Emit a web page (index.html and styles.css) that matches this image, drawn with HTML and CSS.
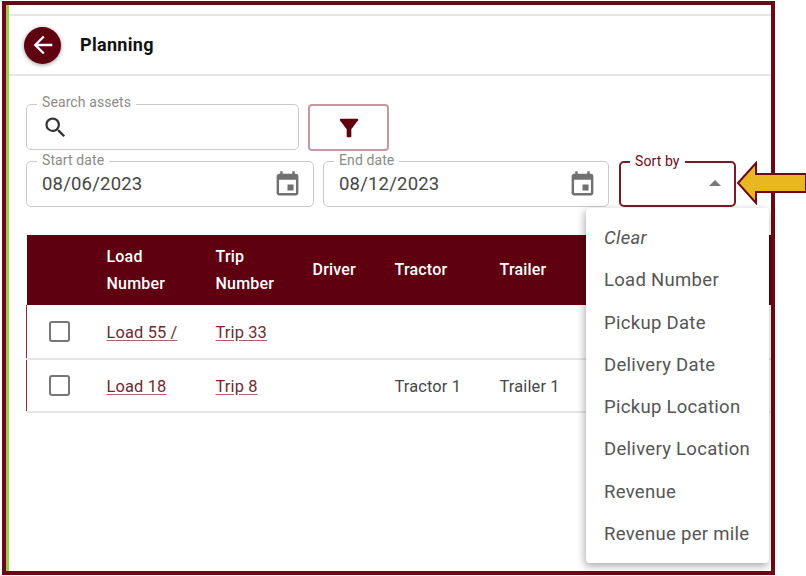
FILE: index.html
```html
<!DOCTYPE html>
<html lang="en">
<head>
    <meta charset="UTF-8">
    <title>Planning</title>
    <link rel="stylesheet" href="styles.css">
</head>
<body>
    <div class="frame">
        <div class="page">
            <header class="top-bar">
                <button class="back-btn">
                    <svg viewBox="0 0 24 24" width="28" height="28"><path d="M20 11H7.83l5.59-5.59L12 4l-8 8 8 8 1.41-1.41L7.83 13H20v-2z"/></svg>
                </button>
                <h1>Planning</h1>
            </header>

            <div class="filters">
                <div class="filter-row first-row">
                    <div class="field search-field">
                        <label>Search assets</label>
                        <svg class="search-icon" viewBox="0 0 24 24" width="27" height="27"><path d="M15.5 14h-.79l-.28-.27A6.471 6.471 0 0 0 16 9.5 6.5 6.5 0 1 0 9.5 16c1.61 0 3.09-.59 4.23-1.57l.27.28v.79l5 4.99L20.49 19l-4.99-5zm-6 0C7.01 14 5 11.99 5 9.5S7.01 5 9.5 5 14 7.01 14 9.5 11.99 14 9.5 14z"/></svg>
                    </div>
                    <button class="filter-btn">
                        <svg viewBox="0 0 24 24" width="28" height="28"><path d="M4.25 5.61C6.27 8.2 10 13 10 13v6c0 .55.45 1 1 1h2c.55 0 1-.45 1-1v-6s3.72-4.8 5.74-7.39A.998.998 0 0 0 18.95 4H5.04c-.83 0-1.3.95-.79 1.61z"/></svg>
                    </button>
                </div>
                <div class="filter-row">
                    <div class="field date-start">
                        <label>Start date</label>
                        <span class="value">08/06/2023</span>
                        <svg class="cal-icon" viewBox="0 0 24 24" width="29" height="29"><path d="M17 12h-5v5h5v-5zM16 1v2H8V1H6v2H5c-1.11 0-1.99.9-1.99 2L3 19c0 1.1.89 2 2 2h14c1.1 0 2-.9 2-2V5c0-1.1-.9-2-2-2h-1V1h-2zm3 18H5V8h14v11z"/></svg>
                    </div>
                    <div class="field date-end">
                        <label>End date</label>
                        <span class="value">08/12/2023</span>
                        <svg class="cal-icon" viewBox="0 0 24 24" width="29" height="29"><path d="M17 12h-5v5h5v-5zM16 1v2H8V1H6v2H5c-1.11 0-1.99.9-1.99 2L3 19c0 1.1.89 2 2 2h14c1.1 0 2-.9 2-2V5c0-1.1-.9-2-2-2h-1V1h-2zm3 18H5V8h14v11z"/></svg>
                    </div>
                    <div class="field sort-field">
                        <label>Sort by</label>
                        <span class="caret"></span>
                    </div>
                </div>
            </div>

            <table class="loads">
                <thead>
                    <tr>
                        <th class="col-check"></th>
                        <th class="col-load">Load<br>Number</th>
                        <th class="col-trip">Trip<br>Number</th>
                        <th class="col-driver">Driver</th>
                        <th class="col-tractor">Tractor</th>
                        <th>Trailer</th>
                    </tr>
                </thead>
                <tbody>
                    <tr>
                        <td><span class="checkbox"></span></td>
                        <td><a href="#">Load 55 /</a></td>
                        <td><a href="#">Trip 33</a></td>
                        <td></td>
                        <td></td>
                        <td></td>
                    </tr>
                    <tr>
                        <td><span class="checkbox"></span></td>
                        <td><a href="#">Load 18</a></td>
                        <td><a href="#">Trip 8</a></td>
                        <td></td>
                        <td>Tractor 1</td>
                        <td>Trailer 1</td>
                    </tr>
                </tbody>
            </table>
        </div>

        <ul class="sort-menu">
            <li class="clear">Clear</li>
            <li>Load Number</li>
            <li>Pickup Date</li>
            <li>Delivery Date</li>
            <li>Pickup Location</li>
            <li>Delivery Location</li>
            <li>Revenue</li>
            <li>Revenue per mile</li>
        </ul>
    </div>

    <svg class="callout" viewBox="0 0 70 44" width="70" height="44"><path d="M2 22 20 2v11h50v18H20v11z"/></svg>
</body>
</html>
```

FILE: styles.css
```css
* {
    box-sizing: border-box;
}
html, body {
    height: 100%;
}
body {
    font-family: 'Roboto', sans-serif;
    margin: 0;
    padding: 1px 0 0 2px;
    background-color: white;
    color: rgb(70, 70, 70);
    overflow: hidden;
}
.frame {
    position: relative;
    width: 773px;
    height: 574px;
    border: 4px solid #6b0a16;
}
.page {
    height: 100%;
    padding-top: 9px;
    border-left: 3px solid #9acd4a;
    overflow: hidden;
}
.top-bar {
    display: flex;
    align-items: center;
    gap: 19px;
    height: 62px;
    padding-left: 15px;
    border-top: 2px solid #e6e6e6;
    border-bottom: 2px solid #e6e6e6;
}
.top-bar h1 {
    margin: 0 0 2px;
    font-size: 18px;
    font-weight: 700;
    letter-spacing: 0.3px;
    color: #111;
}
.back-btn {
    display: flex;
    align-items: center;
    justify-content: center;
    width: 37px;
    height: 37px;
    padding: 0;
    border: none;
    border-radius: 50%;
    background-color: #5f0010;
    box-shadow: 0 1px 4px rgba(0, 0, 0, 0.4);
}
.back-btn svg {
    fill: white;
}
.filters {
    padding: 28px 0 0 17px;
}
.filter-row {
    display: flex;
    gap: 9px;
}
.first-row {
    margin-bottom: 10px;
    height: 47px;
}
.field {
    position: relative;
    display: flex;
    align-items: center;
    height: 46px;
    padding: 0 11px 0 15px;
    border: 1.5px solid #c9c9c9;
    border-radius: 5px;
    font-size: 18.5px;
    letter-spacing: 0.2px;
}
.field label {
    position: absolute;
    top: -10px;
    left: 10px;
    padding: 0 5px;
    background: white;
    font-size: 14px;
    line-height: 16px;
    letter-spacing: 0.1px;
    color: #8a8a8a;
}
.search-field {
    width: 273px;
}
.search-field label {
    top: -11px;
}
.search-icon {
    fill: #333;
}
.date-start {
    width: 288px;
}
.date-end {
    width: 286px;
}
.cal-icon {
    margin-left: auto;
    fill: #707070;
}
.sort-field {
    width: 117px;
    margin-left: 1px;
    border: 2px solid #7b1a28;
}
.sort-field label {
    left: 9px;
    color: #6b0a16;
}
.caret {
    position: absolute;
    top: 17px;
    right: 13px;
    border-left: 6px solid transparent;
    border-right: 6px solid transparent;
    border-bottom: 6px solid #777;
}
.filter-btn {
    display: flex;
    align-items: center;
    justify-content: center;
    width: 81px;
    height: 47px;
    padding: 0;
    border: 2px solid #c49aa0;
    border-radius: 4px;
    background: white;
}
.filter-btn svg {
    fill: #5f0010;
}
.loads {
    width: 745px;
    margin: 28px 0 0 17px;
    border-collapse: collapse;
    table-layout: fixed;
    font-size: 16.4px;
    letter-spacing: 0.15px;
}
.loads th {
    height: 70px;
    padding: 0;
    background-color: #5f0010;
    color: white;
    font-size: 16px;
    font-weight: 500;
    line-height: 27.5px;
    letter-spacing: 0.2px;
    text-align: left;
}
.loads td {
    height: 53.5px;
    padding: 3px 0 0;
    border-bottom: 2px solid #e6e6e6;
}
.loads tbody tr td:first-child {
    border-left: 1.5px solid #8c2a38;
}
.loads a {
    color: #6b2a34;
    text-decoration-color: #a9636d;
    text-underline-offset: 2px;
}
.col-check {
    width: 80px;
}
.col-load {
    width: 109px;
}
.col-trip {
    width: 97px;
}
.col-driver {
    width: 82px;
}
.col-tractor {
    width: 105px;
}
.checkbox {
    display: block;
    width: 21px;
    height: 21px;
    margin: -3px 0 0 22px;
    border: 2px solid #777;
    border-radius: 3px;
}
.sort-menu {
    position: absolute;
    top: 203px;
    left: 580px;
    width: 183px;
    height: 355px;
    margin: 0;
    padding: 8px 0 0 18px;
    list-style: none;
    background: white;
    border-radius: 4px;
    box-shadow: -1px 3px 8px rgba(0, 0, 0, 0.35);
    font-size: 18.5px;
    letter-spacing: 0.3px;
    color: #555;
}
.sort-menu li {
    height: 42.3px;
    line-height: 42.3px;
    padding-top: 1px;
}
.sort-menu .clear {
    font-style: italic;
}
.callout {
    position: absolute;
    top: 161px;
    left: 736px;
}
.callout path {
    fill: #e9b820;
    stroke: #6b0a16;
    stroke-width: 2;
}
```
